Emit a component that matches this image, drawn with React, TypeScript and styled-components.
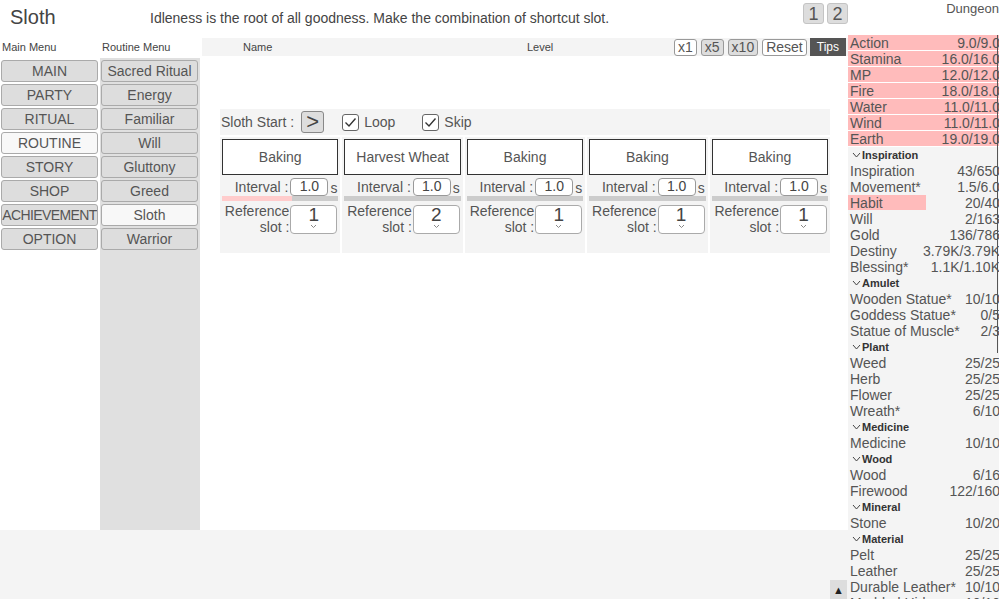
import React from 'react';
import styled, { createGlobalStyle } from 'styled-components';

const GlobalStyle = createGlobalStyle`
    body {
        margin: 0;
        font-family: 'Liberation Sans', Arial, sans-serif;
        color: #555;
        background: #fff;
        overflow: hidden;
    }
`;

const mainMenu = ['MAIN', 'PARTY', 'RITUAL', 'ROUTINE', 'STORY', 'SHOP', 'ACHIEVEMENT', 'OPTION'];
const routineMenu = ['Sacred Ritual', 'Energy', 'Familiar', 'Will', 'Gluttony', 'Greed', 'Sloth', 'Warrior'];

const slots = [
    { name: 'Baking', ref: 1, progress: 60 },
    { name: 'Harvest Wheat', ref: 2, progress: 0 },
    { name: 'Baking', ref: 1, progress: 0 },
    { name: 'Baking', ref: 1, progress: 0 },
    { name: 'Baking', ref: 1, progress: 0 },
];

const stats = [
    ['Action', '9.0/9.0'],
    ['Stamina', '16.0/16.0'],
    ['MP', '12.0/12.0'],
    ['Fire', '18.0/18.0'],
    ['Water', '11.0/11.0'],
    ['Wind', '11.0/11.0'],
    ['Earth', '19.0/19.0'],
];

type Item = { name: string; value: string; fill?: number };

const sections: { title: string; items: Item[] }[] = [
    {
        title: 'Inspiration',
        items: [
            { name: 'Inspiration', value: '43/650' },
            { name: 'Movement*', value: '1.5/6.0' },
            { name: 'Habit', value: '20/40', fill: 51 },
            { name: 'Will', value: '2/163' },
            { name: 'Gold', value: '136/786' },
            { name: 'Destiny', value: '3.79K/3.79K' },
            { name: 'Blessing*', value: '1.1K/1.10K' },
        ],
    },
    {
        title: 'Amulet',
        items: [
            { name: 'Wooden Statue*', value: '10/10' },
            { name: 'Goddess Statue*', value: '0/5' },
            { name: 'Statue of Muscle*', value: '2/3' },
        ],
    },
    {
        title: 'Plant',
        items: [
            { name: 'Weed', value: '25/25' },
            { name: 'Herb', value: '25/25' },
            { name: 'Flower', value: '25/25' },
            { name: 'Wreath*', value: '6/10' },
        ],
    },
    { title: 'Medicine', items: [{ name: 'Medicine', value: '10/10' }] },
    {
        title: 'Wood',
        items: [
            { name: 'Wood', value: '6/16' },
            { name: 'Firewood', value: '122/160' },
        ],
    },
    { title: 'Mineral', items: [{ name: 'Stone', value: '10/20' }] },
    {
        title: 'Material',
        items: [
            { name: 'Pelt', value: '25/25' },
            { name: 'Leather', value: '25/25' },
            { name: 'Durable Leather*', value: '10/10' },
            { name: 'Marbled Hide', value: '10/10' },
        ],
    },
];

const Page = styled.div`
    width: 999px;
    height: 599px;
    overflow: hidden;
    display: grid;
    grid-template-columns: 848px 151px;
    grid-template-rows: 35px 564px;
`;

const Header = styled.header`
    display: flex;
    align-items: center;
    height: 35px;
`;

const Title = styled.h1`
    margin: 0;
    width: 150px;
    padding-left: 10px;
    box-sizing: border-box;
    font-size: 20px;
    font-weight: normal;
    color: #444;
`;

const Description = styled.div`
    flex: 1;
    font-size: 14px;
    color: #444;
`;

const PageButtons = styled.div`
    display: flex;
    gap: 3px;
    align-self: flex-start;
    margin-top: 3px;
`;

const PageButton = styled.button`
    width: 21px;
    height: 21px;
    padding: 0;
    border: 1px solid #c4c4c4;
    border-radius: 3px;
    background: #ddd;
    font-family: inherit;
    font-size: 18px;
    color: #555;
`;

const Dungeon = styled.div`
    text-align: right;
    font-size: 13px;
    padding-top: 1px;
    white-space: nowrap;
`;

const Left = styled.div`
    position: relative;
    display: flex;
    flex-direction: column;
`;

const Content = styled.div`
    display: flex;
    height: 495px;
    padding-top: 3px;
    box-sizing: border-box;
`;

const MenuColumn = styled.nav`
    width: 100px;
    display: flex;
    flex-direction: column;
`;

const MenuLabel = styled.div`
    height: 20px;
    line-height: 18px;
    font-size: 11px;
    padding-left: 2px;
    color: #444;
`;

const MenuList = styled.div<{ $shaded?: boolean }>`
    flex: 1;
    display: flex;
    flex-direction: column;
    gap: 2px;
    padding-top: 2px;
    background: ${(p) => (p.$shaded ? '#e0e0e0' : 'transparent')};
`;

const MenuButton = styled.button<{ $active?: boolean; $squeeze?: boolean }>`
    width: 97px;
    height: 22px;
    margin-left: 1px;
    padding: 0;
    border: 1px solid #aaa;
    border-radius: 3px;
    background: ${(p) => (p.$active ? '#f8f8f8' : '#ddd')};
    font-family: inherit;
    font-size: 14px;
    letter-spacing: ${(p) => (p.$squeeze ? '-0.6px' : 'normal')};
    color: #555;
    white-space: nowrap;
    overflow: hidden;
`;

const Main = styled.main`
    width: 646px;
    margin-left: 2px;
    display: flex;
    flex-direction: column;
`;

const NameBar = styled.div`
    height: 18px;
    display: flex;
    align-items: center;
    background: #f4f4f4;
    font-size: 11px;
    color: #444;
`;

const NameLabel = styled.span`
    width: 325px;
    padding-left: 41px;
    box-sizing: border-box;
`;

const LevelLabel = styled.span`
    flex: 1;
`;

const SpeedButton = styled.button<{ $on?: boolean }>`
    height: 17px;
    margin-right: 4px;
    padding: 0 3px;
    border: 1px solid #999;
    border-radius: 3px;
    background: ${(p) => (p.$on ? '#ddd' : '#fff')};
    font-family: inherit;
    font-size: 14px;
    line-height: 14px;
    color: #555;
`;

const TipsButton = styled.button`
    height: 18px;
    margin-right: 2px;
    margin-left: -1px;
    padding: 0 7px;
    border: none;
    background: #555;
    color: #fff;
    font-family: inherit;
    font-size: 12px;
`;

const SlothPanel = styled.section`
    margin: 53px 0 0 18px;
    width: 610px;
    display: flex;
    flex-direction: column;
    gap: 2px;
`;

const StartRow = styled.div`
    height: 26px;
    display: flex;
    align-items: center;
    padding-left: 1px;
    background: #f4f4f4;
    font-size: 14px;
`;

const StartButton = styled.button`
    width: 23px;
    height: 22px;
    margin-left: 7px;
    padding: 0;
    border: 1px solid #888;
    border-radius: 3px;
    background: #ddd;
    font-family: inherit;
    font-size: 22px;
    line-height: 18px;
    color: #444;
`;

const CheckLabel = styled.label<{ $gap: number }>`
    display: flex;
    align-items: center;
    gap: 5px;
    margin-left: ${(p) => p.$gap}px;
`;

const CheckBox = styled.span`
    width: 15px;
    height: 15px;
    border: 1px solid #666;
    border-radius: 3px;
    background: #fff;
    display: flex;
    align-items: center;
    justify-content: center;
`;

const Cards = styled.div`
    display: flex;
    gap: 2px;
`;

const Card = styled.div`
    flex: 1;
    height: 116px;
    padding: 2px;
    box-sizing: border-box;
    background: #f4f4f4;
`;

const SlotName = styled.div`
    height: 34px;
    border: 1px solid #333;
    background: #fff;
    display: flex;
    align-items: center;
    justify-content: center;
    font-size: 14px;
    white-space: nowrap;
`;

const IntervalRow = styled.div`
    display: flex;
    justify-content: flex-end;
    align-items: center;
    height: 19px;
    margin-top: 2px;
    font-size: 14px;
`;

const IntervalInput = styled.span`
    width: 36px;
    height: 16px;
    margin-left: 2px;
    border: 1px solid #999;
    border-radius: 4px;
    background: #fff;
    text-align: center;
    line-height: 15px;
    font-size: 14px;
    color: #444;
`;

const Unit = styled.span`
    margin: 2px 0 0 2px;
    padding-right: 1px;
`;

const Progress = styled.div`
    height: 5px;
    background: #ccc;
`;

const ProgressFill = styled.div`
    height: 100%;
    background: #fcc;
`;

const RefRow = styled.div`
    display: flex;
    justify-content: flex-end;
    margin-top: 2px;
    padding-right: 1px;
`;

const RefLabel = styled.div`
    text-align: right;
    font-size: 14px;
    line-height: 16px;
    margin-right: 1px;
`;

const SlotSelect = styled.div`
    width: 45px;
    height: 27px;
    margin-top: 2px;
    border: 1px solid #aaa;
    border-radius: 4px;
    background: #fff;
    display: flex;
    flex-direction: column;
    align-items: center;
    font-size: 19px;
    line-height: 18px;
    color: #444;
`;

const Footer = styled.footer`
    flex: 1;
    background: #f4f4f4;
`;

const TopButton = styled.button`
    position: absolute;
    right: 1px;
    bottom: 0;
    width: 17px;
    height: 19px;
    padding: 0;
    border: none;
    background: #ddd;
    color: #222;
    font-size: 11px;
`;

const Panel = styled.aside`
    position: relative;
    overflow: hidden;
    background: #fff;
`;

const ScrollThumb = styled.div`
    position: absolute;
    right: 1px;
    top: 0;
    width: 1px;
    height: 318px;
    background: #555;
    z-index: 2;
`;

const StatList = styled.div`
    width: 152px;
`;

const Group = styled.div`
    background: #f4f4f4;
`;

const Row = styled.div`
    position: relative;
    height: 16px;
    display: flex;
    justify-content: space-between;
    padding-left: 2px;
    font-size: 14px;
    line-height: 16px;
    white-space: nowrap;
    color: #555;
`;

const Fill = styled.div`
    position: absolute;
    left: 0;
    top: 0;
    height: 15px;
    background: #fbb;
`;

const RowText = styled.span`
    position: relative;
`;

const SectionTitle = styled.div`
    height: 16px;
    display: flex;
    align-items: center;
    gap: 1px;
    padding-left: 4px;
    font-size: 11px;
    font-weight: bold;
    color: #333;
`;

const Chevron = () => (
    <svg width="9" height="6" viewBox="0 0 9 6">
        <path d="M1 1 L4.5 5 L8 1" fill="none" stroke="#444" strokeWidth="1" />
    </svg>
);

const Check = () => (
    <svg width="13" height="11" viewBox="0 0 13 11">
        <path d="M1.5 5.5 L5 9 L11.5 1.5" fill="none" stroke="#333" strokeWidth="1.4" />
    </svg>
);

const StatRow = ({ name, value, fill }: Item) => (
    <Row>
        {fill !== undefined && <Fill style={{ width: `${fill}%` }} />}
        <RowText>{name}</RowText>
        <RowText>{value}</RowText>
    </Row>
);

export default function App() {
    return (
        <>
            <GlobalStyle />
            <Page>
                <Header>
                    <Title>Sloth</Title>
                    <Description>Idleness is the root of all goodness. Make the combination of shortcut slot.</Description>
                    <PageButtons>
                        <PageButton>1</PageButton>
                        <PageButton>2</PageButton>
                    </PageButtons>
                </Header>
                <Dungeon>Dungeon</Dungeon>

                <Left>
                    <Content>
                        <MenuColumn>
                            <MenuLabel>Main Menu</MenuLabel>
                            <MenuList>
                                {mainMenu.map((m) => (
                                    <MenuButton key={m} $active={m === 'ROUTINE'} $squeeze={m === 'ACHIEVEMENT'}>
                                        {m}
                                    </MenuButton>
                                ))}
                            </MenuList>
                        </MenuColumn>
                        <MenuColumn>
                            <MenuLabel>Routine Menu</MenuLabel>
                            <MenuList $shaded>
                                {routineMenu.map((m) => (
                                    <MenuButton key={m} $active={m === 'Sloth'}>
                                        {m}
                                    </MenuButton>
                                ))}
                            </MenuList>
                        </MenuColumn>
                        <Main>
                            <NameBar>
                                <NameLabel>Name</NameLabel>
                                <LevelLabel>Level</LevelLabel>
                                <SpeedButton>x1</SpeedButton>
                                <SpeedButton $on>x5</SpeedButton>
                                <SpeedButton $on>x10</SpeedButton>
                                <SpeedButton>Reset</SpeedButton>
                                <TipsButton>Tips</TipsButton>
                            </NameBar>
                            <SlothPanel>
                                <StartRow>
                                    Sloth Start :<StartButton>&gt;</StartButton>
                                    <CheckLabel $gap={18}>
                                        <CheckBox>
                                            <Check />
                                        </CheckBox>
                                        Loop
                                    </CheckLabel>
                                    <CheckLabel $gap={27}>
                                        <CheckBox>
                                            <Check />
                                        </CheckBox>
                                        Skip
                                    </CheckLabel>
                                </StartRow>
                                <Cards>
                                    {slots.map((s, i) => (
                                        <Card key={i}>
                                            <SlotName>{s.name}</SlotName>
                                            <IntervalRow>
                                                Interval :<IntervalInput>1.0</IntervalInput>
                                                <Unit>s</Unit>
                                            </IntervalRow>
                                            <Progress>
                                                <ProgressFill style={{ width: `${s.progress}%` }} />
                                            </Progress>
                                            <RefRow>
                                                <RefLabel>
                                                    Reference
                                                    <br />
                                                    slot :
                                                </RefLabel>
                                                <SlotSelect>
                                                    {s.ref}
                                                    <svg width="7" height="5" viewBox="0 0 7 5">
                                                        <path d="M1 1 L3.5 3.5 L6 1" fill="none" stroke="#888" strokeWidth="1" />
                                                    </svg>
                                                </SlotSelect>
                                            </RefRow>
                                        </Card>
                                    ))}
                                </Cards>
                            </SlothPanel>
                        </Main>
                    </Content>
                    <Footer />
                    <TopButton>▲</TopButton>
                </Left>

                <Panel>
                    <ScrollThumb />
                    <StatList>
                        {stats.map(([n, v]) => (
                            <StatRow key={n} name={n} value={v} fill={100} />
                        ))}
                        <Group>
                            {sections.map((sec) => (
                                <React.Fragment key={sec.title}>
                                    <SectionTitle>
                                        <Chevron />
                                        {sec.title}
                                    </SectionTitle>
                                    {sec.items.map((it) => (
                                        <StatRow key={it.name} {...it} />
                                    ))}
                                </React.Fragment>
                            ))}
                        </Group>
                    </StatList>
                </Panel>
            </Page>
        </>
    );
}
